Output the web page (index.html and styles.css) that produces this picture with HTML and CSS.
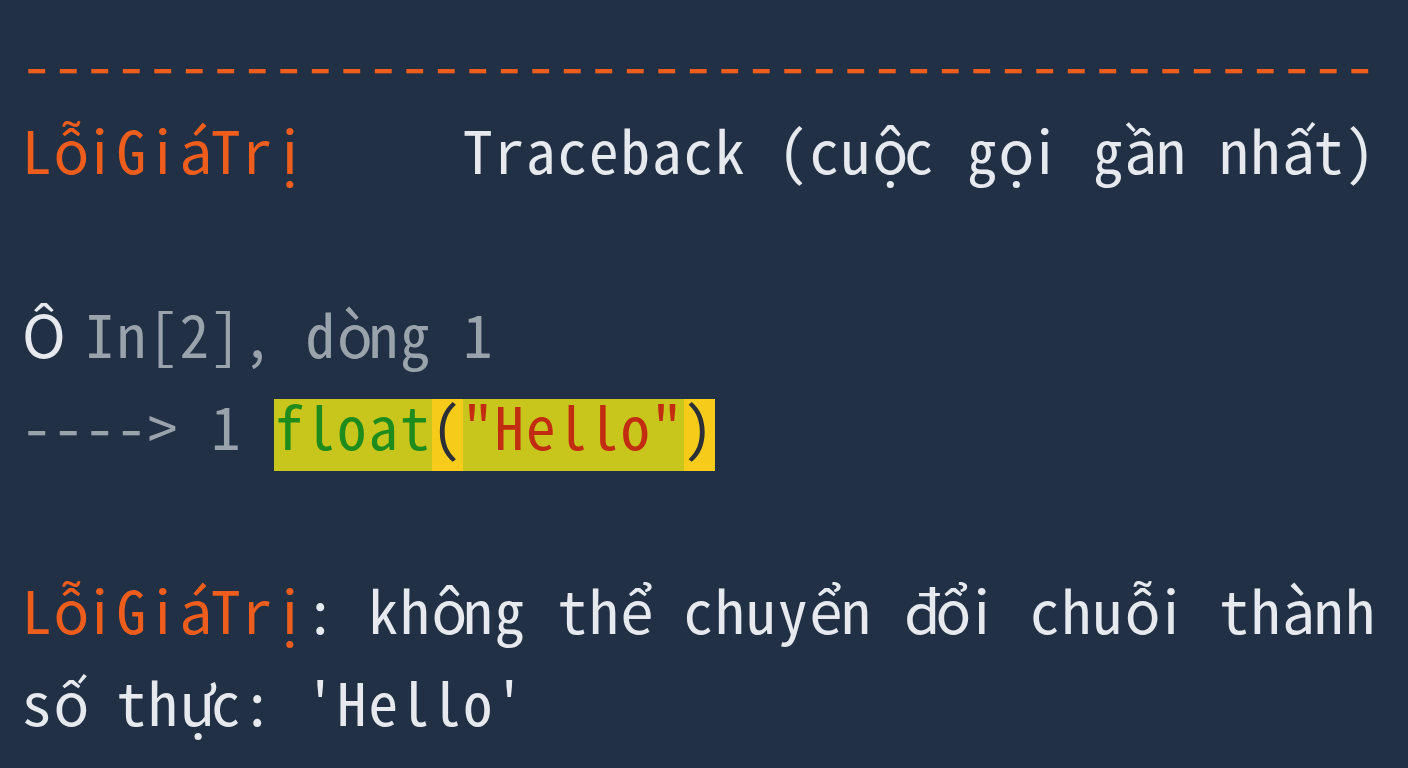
FILE: index.html
```html
<!DOCTYPE html>
<html lang="vi">
<head>
<meta charset="utf-8">
<title>Traceback</title>
<link rel="stylesheet" href="styles.css">
</head>
<body>
<pre class="tb"><span class="err rule">-------------------------------------------</span>
<span class="err">L<span class="c">ỗ</span>iGi<span class="c">á</span>Tr<span class="c">ị</span></span>     <span class="txt">Traceback (cu<span class="c">ộ</span>c g<span class="c">ọ</span>i g<span class="c">ầ</span>n nh<span class="c">ấ</span>t)</span>

<span class="txt"><span class="c">Ô</span></span> <span class="dim">In[2], d<span class="c">ò</span>ng 1</span>
<span class="dim">----&gt; 1 </span><span class="hl"><span class="fn">float</span><span class="par">(</span><span class="str">"Hello"</span><span class="par">)</span></span>

<span class="err">L<span class="c">ỗ</span>iGi<span class="c">á</span>Tr<span class="c">ị</span></span><span class="txt">: kh<span class="c">ô</span>ng th<span class="c">ể</span> chuy<span class="c">ể</span>n <span class="c">đ</span><span class="c">ổ</span>i chu<span class="c">ỗ</span>i th<span class="c">à</span>nh
s<span class="c">ố</span> th<span class="c">ự</span>c: 'Hello'</span></pre>
</body>
</html>
```
FILE: styles.css
```css
html, body {
  margin: 0;
  padding: 0;
  background: #213045;
  height: 100%;
  overflow: hidden;
}
.tb {
  margin: 0;
  padding: 11px 0 0 22px;
  font-family: "Noto Sans Mono CJK SC", "Liberation Mono", monospace;
  font-size: 59px;
  letter-spacing: 2px;
  line-height: 92px;
  white-space: pre;
  color: #e6e9ee;
}
.c {
  display: inline-block;
  width: 31.5px;
  text-align: center;
  letter-spacing: 0;
  line-height: 60px;
}
.rule {
  line-height: 60px;
  vertical-align: -6px;
}
.err { color: #ee5d1c; }
.txt { color: #e6e9ee; }
.dim { color: #9aa2ac; }
.hl {
  display: inline-block;
  background: #c8c51c;
  line-height: 52px;
  height: 72px;
}
.fn { color: #1d8c1c; }
.str { color: #c22c10; }
.par {
  display: inline-block;
  color: #2b2f38;
  background: #f6cb1a;
  line-height: 52px;
  height: 72px;
}
```
